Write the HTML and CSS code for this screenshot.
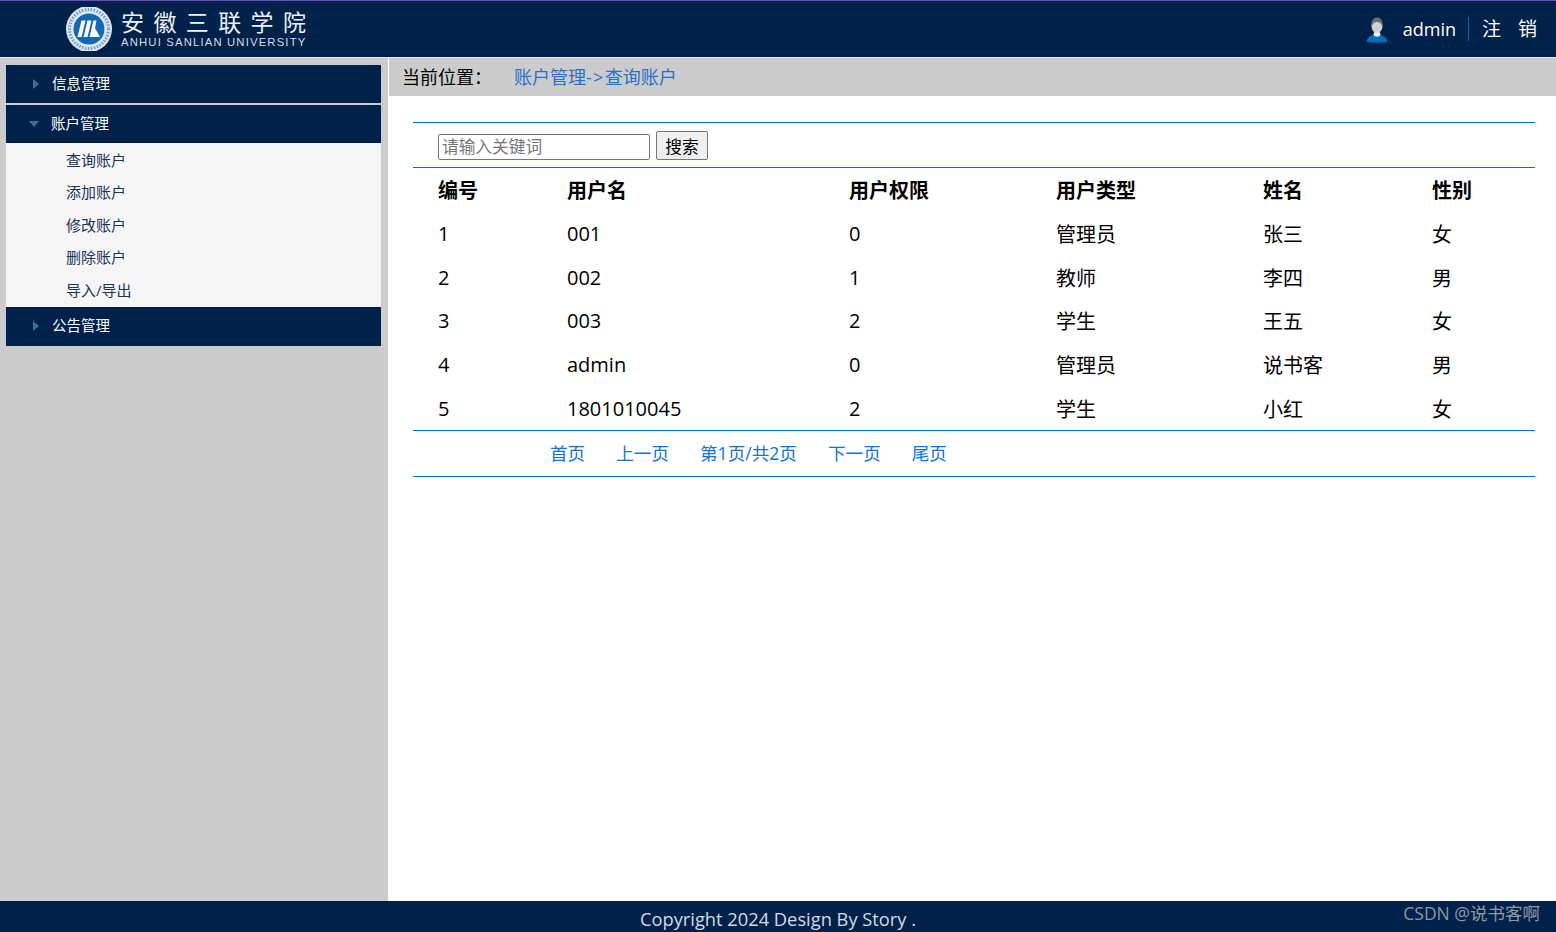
FILE: index.html
```html
<!DOCTYPE html>
<html lang="zh">
<head>
<meta charset="utf-8">
<title>账户管理</title>
<link rel="stylesheet" href="styles.css">
</head>
<body>
<div class="page">
  <header class="header">
    <div class="logo">
      <svg class="logo-mark" width="48" height="44" viewBox="0 0 48 44">
        <circle cx="24" cy="22" r="23" fill="#dbe6f0"/>
        <circle cx="24" cy="22" r="19.500" fill="none" stroke="#6f9dc6" stroke-width="3" stroke-dasharray="1.500 1.500"/>
        <circle cx="24" cy="22" r="16.500" fill="#e8eef4"/>
        <circle cx="24" cy="22" r="15.500" fill="#1268b3"/>
        <path d="M12.500 30 L16.500 13.500 H20.500 L16.500 30Z M18.500 30 L22.500 13.500 H26.500 L22.500 30Z M24.500 30 L28.500 13.500 H31.500 L30 21 L35 30Z" fill="#fff"/>
      </svg>
      <div class="logo-text">
        <div class="logo-cn">安徽三联学院</div>
        <div class="logo-en">ANHUI SANLIAN UNIVERSITY</div>
      </div>
    </div>
    <div class="user">
      <svg class="avatar" width="22" height="26" viewBox="0 0 22 26">
        <path d="M0.500 25 C0.500 20 6 18.500 8 17.500 L14 17.500 C16 18.500 21.500 20 21.500 25 C15 26 7 26 0.500 25Z" fill="#0a6cb8"/>
        <path d="M7.500 17.500 C8.500 20.500 13.500 20.500 14.500 17.500 L13 13 H9Z" fill="#efefef"/>
        <ellipse cx="11" cy="9" rx="5.500" ry="7" fill="#d0d0d0"/>
        <path d="M5.500 10 C4.500 3 8 0.500 11 0.500 C14.500 0.500 17.500 3 16.500 10 C15.500 6 13 5 11 5 C9 5 6.500 6 5.500 10Z" fill="#6c6c6c"/>
      </svg>
      <span class="user-name">admin</span>
      <span class="logout">注 销</span>
    </div>
  </header>

  <div class="body">
    <aside class="sidebar">
      <nav class="menu">
        <div class="menu-head">
          <span class="arrow-right"></span>
          <span>信息管理</span>
        </div>
        <div class="menu-head menu-head-open">
          <span class="arrow-down"></span>
          <span>账户管理</span>
        </div>
        <ul class="submenu">
          <li>查询账户</li>
          <li>添加账户</li>
          <li>修改账户</li>
          <li>删除账户</li>
          <li>导入/导出</li>
        </ul>
        <div class="menu-head menu-head-last">
          <span class="arrow-right"></span>
          <span>公告管理</span>
        </div>
      </nav>
    </aside>

    <main class="main">
      <div class="crumb">
        <span class="crumb-label">当前位置：</span>
        <a class="crumb-link">账户管理<span class="crumb-arrow">-&gt;</span>查询账户</a>
      </div>
      <section class="panel">
        <form class="search">
          <input class="search-input" type="text" placeholder="请输入关键词">
          <button class="search-btn" type="button">搜索</button>
        </form>
        <table class="grid">
          <colgroup>
            <col class="c1"><col class="c2"><col class="c3"><col class="c4"><col class="c5"><col class="c6">
          </colgroup>
          <thead>
            <tr><th>编号</th><th>用户名</th><th>用户权限</th><th>用户类型</th><th>姓名</th><th>性别</th></tr>
          </thead>
          <tbody>
            <tr><td>1</td><td>001</td><td>0</td><td>管理员</td><td>张三</td><td>女</td></tr>
            <tr><td>2</td><td>002</td><td>1</td><td>教师</td><td>李四</td><td>男</td></tr>
            <tr><td>3</td><td>003</td><td>2</td><td>学生</td><td>王五</td><td>女</td></tr>
            <tr><td>4</td><td>admin</td><td>0</td><td>管理员</td><td>说书客</td><td>男</td></tr>
            <tr><td>5</td><td>1801010045</td><td>2</td><td>学生</td><td>小红</td><td>女</td></tr>
          </tbody>
        </table>
        <div class="pager">
          <a>首页</a>
          <a>上一页</a>
          <a>第1页/共2页</a>
          <a>下一页</a>
          <a>尾页</a>
        </div>
      </section>
    </main>
  </div>

  <footer class="footer">Copyright 2024 Design By Story .</footer>
  <div class="watermark">CSDN @说书客啊</div>
</div>
</body>
</html>
```

FILE: styles.css
```css
* {
  box-sizing: border-box;
}

html,
body {
  margin: 0;
  padding: 0;
  height: 100%;
  overflow: hidden;
}

body {
  font-family: "Open Sans", "Noto Sans CJK SC", sans-serif;
  color: #000;
  background: #fff;
}

.page {
  position: relative;
  display: flex;
  flex-direction: column;
  height: 932px;
}

.header {
  flex: none;
  height: 58px;
  display: flex;
  justify-content: space-between;
  align-items: center;
  background: #002149;
  border-top: 1px solid #6a4fb5;
  border-bottom: 1px solid #e6e6e6;
  color: #fff;
}

.logo {
  display: flex;
  align-items: center;
  gap: 8px;
  margin-left: 65px;
}

.logo-text {
  display: flex;
  flex-direction: column;
}

.logo-cn {
  font-family: "Noto Sans CJK SC", sans-serif;
  font-size: 23px;
  line-height: 24px;
  letter-spacing: 9.400px;
  font-weight: 400;
  color: #eef2f6;
  white-space: nowrap;
  margin-bottom: 3px;
  margin-top: -1px;
}

.logo-en {
  font-family: "Liberation Sans", sans-serif;
  font-size: 11.300px;
  line-height: 12px;
  letter-spacing: 1.160px;
  color: #d6dde6;
  white-space: nowrap;
}

.user {
  display: flex;
  align-items: center;
  margin-right: 19px;
}

.avatar {
  margin-right: 15px;
  margin-top: 1px;
}

.user-name {
  font-size: 18px;
  padding-right: 12px;
  line-height: 24px;
  border-right: 1px solid #0a63b5;
}

.logout {
  font-size: 19px;
  line-height: 24px;
  padding-left: 13px;
  word-spacing: 12px;
  white-space: nowrap;
}

.body {
  flex: 1;
  display: flex;
  min-height: 0;
}

.sidebar {
  flex: none;
  width: 388px;
  background: #ccc;
  padding: 7px 7px 0 6px;
}

.menu {
  display: flex;
  flex-direction: column;
}

.menu-head {
  display: flex;
  align-items: center;
  height: 38px;
  margin-bottom: 2px;
  padding-left: 27px;
  padding-bottom: 3px;
  background: #002149;
  color: #fff;
  font-size: 14.500px;
}

.menu-head-open {
  margin-bottom: 0;
}

.menu-head-last {
  height: 39px;
  margin-bottom: 0;
  padding-bottom: 5px;
}

.arrow-right {
  width: 0;
  height: 0;
  margin-right: 13px;
  margin-top: 3px;
  border-left: 6px solid #3c6f96;
  border-top: 5px solid transparent;
  border-bottom: 5px solid transparent;
}

.arrow-down {
  width: 0;
  height: 0;
  margin-left: -4px;
  margin-right: 12px;
  margin-top: 3px;
  border-top: 6px solid #3c6f96;
  border-left: 5px solid transparent;
  border-right: 5px solid transparent;
}

.submenu {
  list-style: none;
  margin: 0;
  padding: 0.500px 0 0;
  background: #f5f5f5;
  height: 164px;
}

.submenu li {
  height: 32.500px;
  line-height: 33px;
  padding-left: 60px;
  font-size: 15px;
  color: #1c3358;
}

.main {
  flex: 1;
  display: flex;
  flex-direction: column;
  min-width: 0;
  background: #fff;
}

.crumb {
  flex: none;
  display: flex;
  align-items: center;
  height: 38px;
  margin-left: 1px;
  padding-left: 13px;
  padding-bottom: 3px;
  background: #ccc;
  font-size: 18px;
}

.crumb-label {
  width: 112px;
  flex: none;
}

.crumb-link {
  color: #2a6fc9;
}

.crumb-arrow {
  letter-spacing: 1.300px;
}

.panel {
  margin: 26px 21px 0 25px;
  border-top: 1px solid #0a6cd0;
}

.search {
  display: flex;
  align-items: flex-end;
  height: 45px;
  padding-left: 25px;
  padding-bottom: 7px;
  border-bottom: 1px solid #0a6cd0;
}

.search-input {
  width: 212px;
  height: 26px;
  padding: 0 3px 2px;
  font: inherit;
  font-size: 16.700px;
  background: #fff;
  border: 1px solid #767676;
  border-radius: 2px;
}

.search-input::placeholder {
  color: #767676;
  opacity: 1;
}

.search-btn {
  width: 52px;
  height: 29px;
  margin-left: 6px;
  padding: 0;
  font: inherit;
  font-size: 16.700px;
  color: #000;
  background: #efefef;
  border: 1px solid #767676;
  border-radius: 2px;
}

.grid {
  width: 100%;
  table-layout: fixed;
  border-collapse: collapse;
  border-bottom: 1px solid #0a6cd0;
  font-size: 20px;
}

.c1 { width: 129px; }
.c2 { width: 282px; }
.c3 { width: 207px; }
.c4 { width: 207px; }
.c5 { width: 169px; }

.grid th,
.grid td {
  height: 43.700px;
  padding: 0 0 0 25px;
  text-align: left;
  white-space: nowrap;
}

.grid th {
  font-weight: 700;
}

.grid td {
  font-weight: 400;
}

.pager {
  display: flex;
  align-items: center;
  gap: 31px;
  height: 46px;
  padding-left: 137px;
  padding-bottom: 2px;
  border-bottom: 1px solid #0a6cd0;
  color: #1372d6;
  font-size: 17.600px;
}

.footer {
  flex: none;
  height: 31px;
  line-height: 36px;
  text-align: center;
  background: #002149;
  color: #d5dbe3;
  font-size: 18.300px;
  white-space: nowrap;
}

.watermark {
  position: absolute;
  right: 16px;
  bottom: 9px;
  font-size: 17.500px;
  line-height: 20px;
  color: #8f99a6;
}
```
